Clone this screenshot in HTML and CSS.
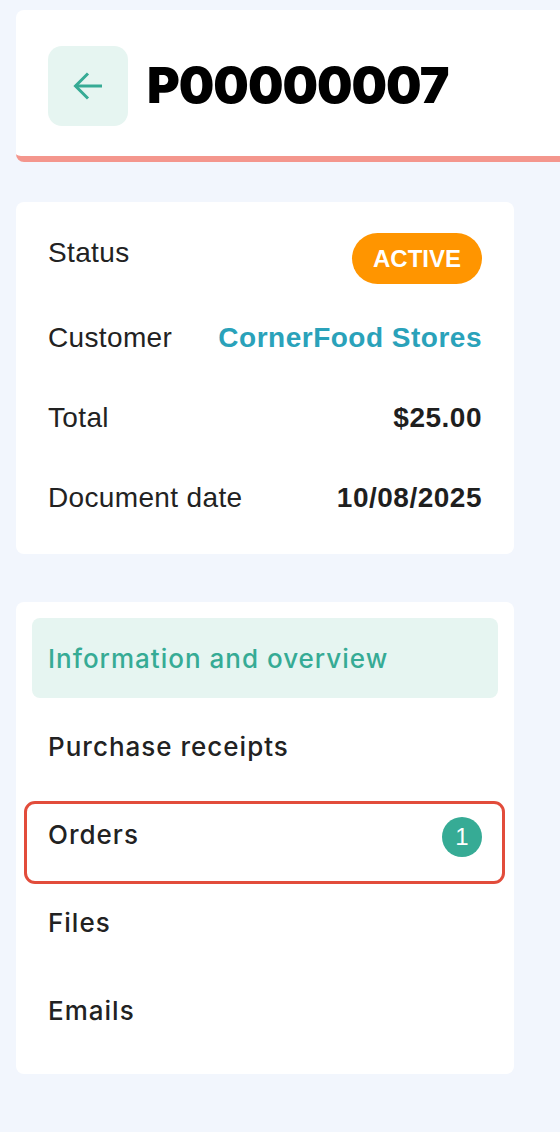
FILE: index.html
```html
<!DOCTYPE html>
<html lang="en">
<head>
    <meta charset="UTF-8">
    <meta name="viewport" content="width=device-width, initial-scale=1.0">
    <title>P00000007</title>
    <link rel="stylesheet" href="styles.css">
</head>
<body>
    <div class="page">
        <header class="doc-header">
            <button class="back-btn" type="button" aria-label="Back">
                <svg width="30" height="28" viewBox="0 0 30 28" fill="none" stroke="#36ab95" stroke-width="3">
                    <path d="M2.5 14H29"/>
                    <path d="M15 1.5L2.5 14 15 26.5"/>
                </svg>
            </button>
            <h1>P00000007</h1>
        </header>

        <section class="card info">
            <div class="row row-first">
                <span class="label">Status</span>
                <span class="badge">ACTIVE</span>
            </div>
            <div class="row">
                <span class="label">Customer</span>
                <a class="value link" href="#">CornerFood Stores</a>
            </div>
            <div class="row">
                <span class="label">Total</span>
                <span class="value">$25.00</span>
            </div>
            <div class="row">
                <span class="label">Document date</span>
                <span class="value">10/08/2025</span>
            </div>
        </section>

        <nav class="card menu">
            <a class="menu-item active" href="#">Information and overview</a>
            <a class="menu-item" href="#">Purchase receipts</a>
            <a class="menu-item highlighted" href="#">
                Orders
                <span class="count">1</span>
            </a>
            <a class="menu-item" href="#">Files</a>
            <a class="menu-item" href="#">Emails</a>
        </nav>
    </div>
</body>
</html>
```

FILE: styles.css
```css
body {
    margin: 0;
    background-color: #f2f6fd;
    font-family: "Liberation Sans", Arial, sans-serif;
    color: #222;
}

.page {
    padding: 10px 46px 40px 16px;
}

/* header, runs to the right edge */
.doc-header {
    display: flex;
    align-items: center;
    gap: 19px;
    margin-right: -46px;
    padding: 36px 32px 30px;
    background-color: #fff;
    border-bottom: 6px solid #f4968d;
    border-radius: 8px 0 0 8px;
}

.back-btn {
    display: flex;
    align-items: center;
    justify-content: center;
    width: 80px;
    height: 80px;
    padding: 0;
    border: none;
    border-radius: 14px;
    background-color: #e6f5f1;
    cursor: pointer;
}

.doc-header h1 {
    margin: 0;
    font-family: Inter, sans-serif;
    font-weight: 900;
    font-size: 50px;
    letter-spacing: -1px;
    line-height: 1;
    color: #000;
    position: relative;
    top: -1px;
}

/* cards */
.card {
    background-color: #fff;
    border-radius: 8px;
}

.info {
    margin-top: 40px;
    padding: 16px 32px;
}

.row {
    display: flex;
    justify-content: space-between;
    align-items: center;
    height: 80px;
    font-size: 28px;
    line-height: 32px;
    letter-spacing: 0.35px;
}

.row-first .label {
    align-self: flex-start;
    margin-top: 19px;
}

.value {
    font-weight: bold;
    letter-spacing: 0.5px;
    color: #1f1f1f;
}

.link {
    color: #2aa2ba;
    text-decoration: none;
}

.badge {
    padding: 0 21px;
    height: 51px;
    line-height: 51px;
    border-radius: 26px;
    background-color: #ff9500;
    color: #fff;
    font-weight: bold;
    font-size: 24px;
    letter-spacing: 0;
}

/* menu */
.menu {
    display: flex;
    flex-direction: column;
    gap: 8px;
    margin-top: 48px;
    padding: 16px 16px 24px;
}

.menu-item {
    position: relative;
    display: flex;
    align-items: center;
    justify-content: space-between;
    height: 80px;
    padding: 0 16px;
    border-radius: 8px;
    font-family: Inter, sans-serif;
    font-weight: 500;
    font-size: 26px;
    letter-spacing: 1px;
    color: #222;
    text-decoration: none;
}

.menu-item.active {
    background-color: #e6f5f1;
    color: #36ab95;
}

.highlighted::after {
    content: "";
    position: absolute;
    top: 7px;
    left: -8px;
    width: 481px;
    height: 83px;
    box-sizing: border-box;
    border: 3px solid #e24c3b;
    border-radius: 11px;
}

.count {
    display: flex;
    align-items: center;
    justify-content: center;
    width: 40px;
    height: 40px;
    margin-top: 6px;
    border-radius: 50%;
    background-color: #36ab95;
    color: #fff;
    font-family: "Liberation Sans", Arial, sans-serif;
    font-size: 24px;
    letter-spacing: 0;
}
```
